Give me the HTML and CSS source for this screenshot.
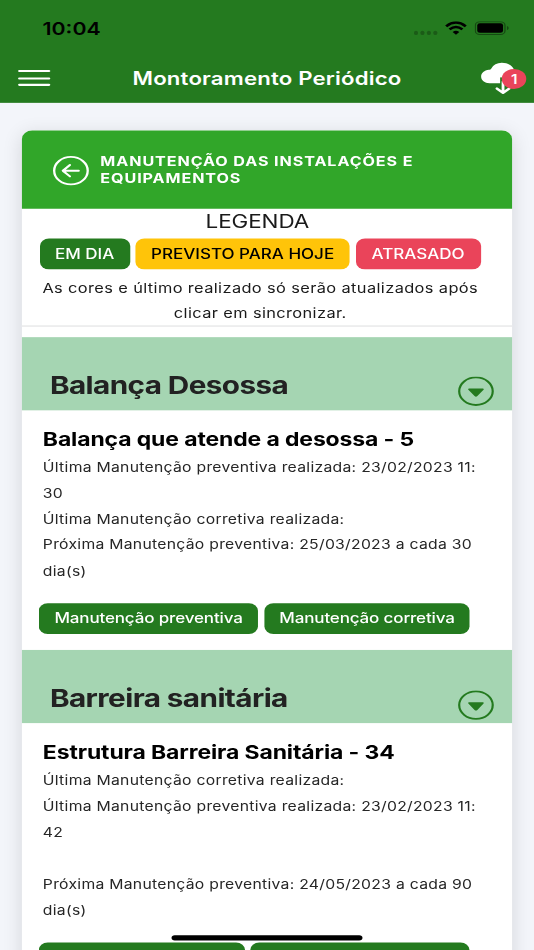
FILE: index.html
```html
<!DOCTYPE html>
<html lang="pt-BR">
<head>
    <meta charset="UTF-8">
    <meta name="viewport" content="width=device-width, initial-scale=1.0">
    <title>Montoramento Periódico</title>
    <link rel="stylesheet" href="styles.css">
</head>
<body>
<div class="screen">

    <!-- Header -->
    <header>
        <div class="status-bar">
            <span class="time">10:04</span>
            <div class="status-icons">
                <div class="dots"><i></i><i></i><i></i><i></i></div>
                <svg class="wifi" width="17" height="13" viewBox="0 0 17 13">
                    <path d="M.9 4.800Q8.500-2.200 16.100 4.800" fill="none" stroke="#000" stroke-width="2.300"/>
                    <path d="M3.500 7.700Q8.500 3.200 13.500 7.700" fill="none" stroke="#000" stroke-width="2.200"/>
                    <path d="M5.900 10.200Q8.500 7.900 11.100 10.200L8.500 12.800z"/>
                </svg>
                <svg class="battery" width="27" height="13" viewBox="0 0 27 13">
                    <rect x=".5" y=".5" width="23" height="12" rx="3.500" fill="none" stroke="#000" stroke-opacity=".4"/>
                    <rect x="2" y="2" width="20" height="9" rx="2"/>
                    <path d="M25 4.500v4q1.400-.6 1.400-2t-1.400-2z" fill-opacity=".4"/>
                </svg>
            </div>
        </div>
        <div class="toolbar">
            <div class="menu"><i></i><i></i><i></i></div>
            <div class="title">Montoramento Periódico</div>
            <div class="sync">
                <svg width="32" height="32" viewBox="0 0 32 32">
                    <path d="M6.500 23.500C2.700 23.500 0 20.800 0 17.200c0-3.400 2.500-6 6-6.400.8-.1 1.400-.2 1.900-1.200C9.500 6.200 12.200 4.200 16 4.200c4.700 0 8.500 2.700 9.700 7.100 3.300.5 5.300 3 5.300 6.100 0 3.500-2.500 6.100-6 6.100z" fill="#fff"/>
                    <path d="M17 18v14" stroke="#247a1f" stroke-width="4.500"/>
                    <path d="M17 22v10.500M12.300 28.500l4.700 4 4.700-4" fill="none" stroke="#fff" stroke-width="2.200" stroke-linecap="round" stroke-linejoin="round"/>
                </svg>
                <span class="badge">1</span>
            </div>
        </div>
    </header>

    <!-- Card -->
    <div class="card">
        <div class="card-header">
            <svg width="28" height="28" viewBox="0 0 28 28" fill="none" stroke="#fff" stroke-width="1.800" stroke-linecap="round" stroke-linejoin="round">
                <circle cx="14" cy="14" r="13"/>
                <path d="M20 14H8M13.200 8.600L7.700 14l5.500 5.400"/>
            </svg>
            <h1>Manutenção das instalações e<br>equipamentos</h1>
        </div>

        <div class="legend">
            <div class="legend-title">LEGENDA</div>
            <div class="buttons">
                <span class="btn em-dia">EM DIA</span>
                <span class="btn hoje">PREVISTO PARA HOJE</span>
                <span class="btn atrasado">ATRASADO</span>
            </div>
            <p>As cores e último realizado só serão atualizados após<br>clicar em sincronizar.</p>
        </div>

        <div class="section-header">
            <h2>Balança Desossa</h2>
            <svg width="28" height="28" viewBox="0 0 28 28">
                <circle cx="14" cy="14" r="13" fill="none" stroke="#247a1f" stroke-width="1.700"/>
                <path d="M8.600 11.400h10.800q1.200.2.500 1.200l-4.800 6q-1.100 1-2.200 0l-4.800-6q-.7-1 .5-1.200z" fill="#247a1f"/>
            </svg>
        </div>
        <div class="item">
            <h3>Balança que atende a desossa - 5</h3>
            <p>Última Manutenção preventiva realizada: 23/02/2023 11:<br>30</p>
            <p>Última Manutenção corretiva realizada:</p>
            <p>Próxima Manutenção preventiva: 25/03/2023 a cada 30<br>dia(s)</p>
            <div class="buttons">
                <a class="btn preventiva">Manutenção preventiva</a>
                <a class="btn corretiva">Manutenção corretiva</a>
            </div>
        </div>

        <div class="section-header">
            <h2>Barreira sanitária</h2>
            <svg width="28" height="28" viewBox="0 0 28 28">
                <circle cx="14" cy="14" r="13" fill="none" stroke="#247a1f" stroke-width="1.700"/>
                <path d="M8.600 11.400h10.800q1.200.2.500 1.200l-4.800 6q-1.100 1-2.200 0l-4.800-6q-.7-1 .5-1.200z" fill="#247a1f"/>
            </svg>
        </div>
        <div class="item">
            <h3>Estrutura Barreira Sanitária - 34</h3>
            <p>Última Manutenção corretiva realizada:</p>
            <p>Última Manutenção preventiva realizada: 23/02/2023 11:<br>42</p>
            <br>
            <p>Próxima Manutenção preventiva: 24/05/2023 a cada 90<br>dia(s)</p>
            <div class="buttons">
                <a class="btn corretiva"></a>
                <a class="btn preventiva"></a>
            </div>
        </div>
    </div>

    <div class="home-indicator"></div>
</div>
</body>
</html>
```

FILE: styles.css
```css
/* General Styles */
* {
    box-sizing: border-box;
}

body {
    margin: 0;
    width: 534px;
    height: 950px;
    overflow: hidden;
    background-color: #f3f5fa;
    font-family: Inter, "Liberation Sans", sans-serif;
}

h1, h2, h3, p {
    margin: 0;
}

/* 414x896 phone screen stretched to the window */
.screen {
    position: relative;
    width: 414px;
    height: 896px;
    overflow: hidden;
    transform: scale(1.28986, 1.06027);
    transform-origin: 0 0;
}

/* Header */
header {
    height: 96.5px;
    background-color: #247a1f;
}

.status-bar {
    display: flex;
    justify-content: space-between;
    align-items: center;
    height: 49px;
    padding: 4px 19.2px 0 33px;
}

.time {
    font-size: 16.5px;
    font-weight: 600;
}

.status-icons {
    display: flex;
    align-items: center;
    gap: 6px;
}

.dots {
    display: flex;
    gap: 1.4px;
    margin: 9px -0.5px 0 0;
}

.dots i {
    width: 3.6px;
    height: 3.6px;
    border-radius: 50%;
    background-color: rgba(0, 0, 0, 0.25);
}

.toolbar {
    display: grid;
    grid-template-columns: 60px 1fr 60px;
    align-items: center;
    height: 47.5px;
}

.menu {
    display: flex;
    flex-direction: column;
    gap: 4.4px;
    width: 25px;
    margin: 2px 0 0 14px;
}

.menu i {
    height: 2px;
    border-radius: 1px;
    background-color: white;
}

.title {
    margin-top: 1.5px;
    color: white;
    font-size: 17.2px;
    font-weight: 600;
    letter-spacing: 0.14px;
    text-align: center;
    white-space: nowrap;
}

.sync {
    position: relative;
    width: 32px;
    height: 32px;
    margin: -4.5px 0 0 18.8px;
}

.sync svg {
    display: block;
    overflow: visible;
}

.badge {
    position: absolute;
    left: 16.4px;
    top: 10.5px;
    width: 19px;
    height: 19px;
    border-radius: 50%;
    background-color: #ea445a;
    color: white;
    font-size: 12px;
    font-weight: 600;
    line-height: 19px;
    text-align: center;
}

/* Card */
.card {
    margin: 26px 17px 0;
    height: 900px;
    border-radius: 8px;
    background-color: white;
    box-shadow: 0 4px 16px rgba(0, 0, 0, 0.12);
}

.card-header {
    display: flex;
    align-items: center;
    gap: 8.5px;
    height: 74px;
    padding: 2.6px 0 0 24.3px;
    border-radius: 8px 8px 0 0;
    background-color: #31a629;
    color: white;
}

.card-header h1 {
    font-size: 12.5px;
    font-weight: 700;
    line-height: 16px;
    letter-spacing: 0.7px;
    text-transform: uppercase;
    margin-top: 0.5px;
    white-space: nowrap;
}

/* Buttons */
.buttons {
    display: flex;
    gap: 4.5px;
}

.btn {
    height: 28.8px;
    border-radius: 7px;
    background-color: #247a1f;
    color: white;
    font-size: 13.2px;
    font-weight: 500;
    line-height: 28.8px;
    text-align: center;
    white-space: nowrap;
}

.preventiva {
    width: 170.2px;
}

.corretiva {
    width: 159.6px;
}

/* Legend */
.legend {
    height: 111px;
    border-bottom: 1px solid #dfe0e1;
    color: #1a1a1a;
}

.legend-title {
    width: 365px;
    padding-top: 0.5px;
    font-size: 17.4px;
    line-height: 24px;
    letter-spacing: -0.07px;
    text-align: center;
}

.legend .buttons {
    margin: 4.4px 0 0 13.6px;
}

.em-dia {
    width: 70px;
}

.hoje {
    width: 166px;
    background-color: #ffc409;
    color: black;
}

.atrasado {
    width: 97px;
    background-color: #ea445a;
}

.legend p {
    width: 369.5px;
    margin-top: 5.6px;
    font-size: 12.7px;
    line-height: 24.4px;
    letter-spacing: 0.3px;
    text-align: center;
    white-space: nowrap;
}

/* Sections */
.section-header {
    display: flex;
    justify-content: space-between;
    height: 69px;
    padding: 0 13.7px 0 21.7px;
    background-color: #a5d5b2;
}

.legend + .section-header {
    margin-top: 10.3px;
}

.section-header h2 {
    margin-top: 31px;
    color: #222;
    font-size: 23px;
    font-weight: 700;
    line-height: 30px;
    letter-spacing: -0.45px;
    white-space: nowrap;
}

.section-header svg {
    margin-top: 37.5px;
}

.item {
    height: 226.3px;
    padding: 16.2px 0 0 16.2px;
    color: #262626;
    font-size: 12.2px;
    line-height: 24.4px;
    letter-spacing: 0.22px;
    white-space: nowrap;
}

.item h3 {
    color: black;
    font-size: 17.8px;
    font-weight: 700;
    line-height: 24px;
    letter-spacing: -0.08px;
    margin-bottom: 2.2px;
}

.item .buttons {
    margin: 18.2px 0 0 -3.1px;
}

.item .btn {
    letter-spacing: -0.12px;
}

/* Home Indicator */
.home-indicator {
    position: absolute;
    left: 133.3px;
    top: 882px;
    width: 147.5px;
    height: 5px;
    border-radius: 3px;
    background-color: black;
}
```
